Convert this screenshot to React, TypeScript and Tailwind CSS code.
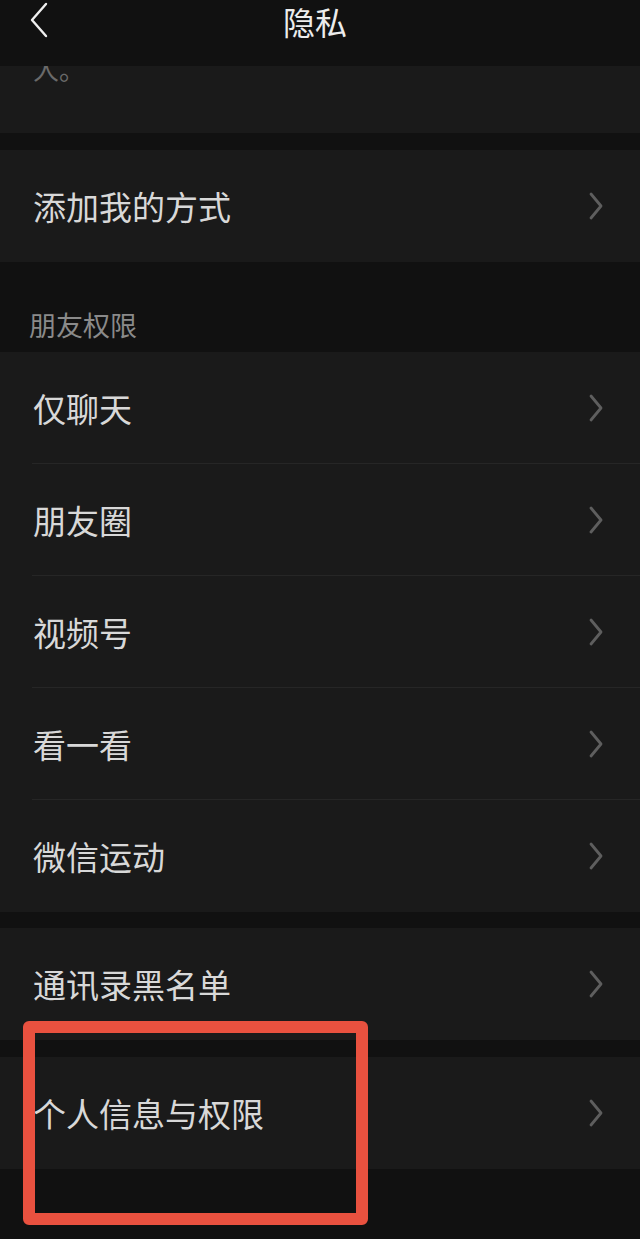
import React from "react";

const font = { fontFamily: '"Noto Sans CJK SC", "Noto Sans", sans-serif' };

function Chevron() {
  return (
    <svg width="16" height="28" viewBox="0 0 16 28" fill="none">
      <path d="M3 2 L13 14 L3 26" stroke="#5e5e5e" strokeWidth="2.8" strokeLinecap="round" strokeLinejoin="round" />
    </svg>
  );
}

function Row({ label, sep }: { label: string; sep?: boolean }) {
  return (
    <div className="relative h-[112px] bg-[#1a1a1a] flex items-center pl-[33px] pr-[36px]">
      <span className="flex-1 text-[33px] leading-none text-[#d8d8d8]">{label}</span>
      <Chevron />
      {sep && <div className="absolute left-[32px] right-0 bottom-0 h-px bg-[#262626]" />}
    </div>
  );
}

export default function App() {
  return (
    <div className="relative w-[640px] h-[1239px] bg-[#111111] overflow-hidden" style={font}>
      <div className="relative h-[66px] bg-[#111111] z-10">
        <svg className="absolute left-[28px] top-[2px]" width="22" height="36" viewBox="0 0 22 36" fill="none">
          <path d="M18 2 L4 18 L18 34" stroke="#f0f0f0" strokeWidth="2.4" strokeLinecap="round" strokeLinejoin="round" />
        </svg>
        <div className="flex justify-center pt-[1px]">
          <span className="mr-[10px] text-[32px] leading-[40px] text-[#ececec]">隐私</span>
        </div>
      </div>
      <div className="h-[67px] bg-[#1a1a1a] overflow-hidden pl-[33px]">
        <div className="mt-[-10px] text-[26px] leading-[26px] text-[#6a6a6a]">人。</div>
      </div>
      <div className="h-[17px]" />
      <Row label="添加我的方式" />
      <div className="h-[90px] flex items-end pl-[29px] pb-[14px]">
        <span className="text-[27px] leading-none text-[#8a8a8a]">朋友权限</span>
      </div>
      <Row label="仅聊天" sep />
      <Row label="朋友圈" sep />
      <Row label="视频号" sep />
      <Row label="看一看" sep />
      <Row label="微信运动" />
      <div className="h-[16px]" />
      <Row label="通讯录黑名单" />
      <div className="h-[17px]" />
      <Row label="个人信息与权限" />
      <div className="absolute left-[23px] top-[1021px] w-[345px] h-[204px] border-[12px] border-[#e9513f] rounded-[6px]" />
    </div>
  );
}
